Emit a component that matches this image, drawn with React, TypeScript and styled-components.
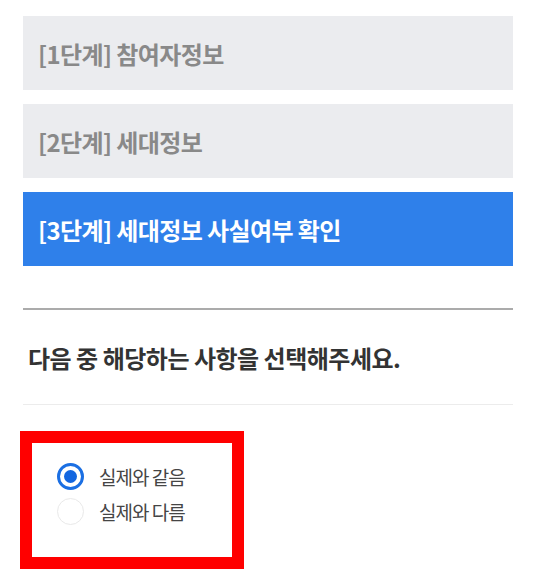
import React, { useState } from "react";
import styled, { createGlobalStyle } from "styled-components";

const Global = createGlobalStyle`
  html, body { margin: 0; padding: 0; background: #fff; }
  body { font-family: "Noto Sans CJK KR", "Noto Sans", sans-serif; }
`;

const Page = styled.div`
  width: 490px;
  padding: 16px 22px 0 23px;
  display: flex;
  flex-direction: column;
`;

const Steps = styled.div`
  display: flex;
  flex-direction: column;
  gap: 14px;
`;

const Step = styled.div<{ $active?: boolean }>`
  height: 74px;
  display: flex;
  align-items: center;
  padding-left: 15px;
  background: ${(p) => (p.$active ? "#2f80ea" : "#ebecef")};
  color: ${(p) => (p.$active ? "#ffffff" : "#898989")};
  font-size: 24px;
  font-weight: 700;
  letter-spacing: -0.6px;
`;

const Spacer = styled.div`
  height: 42px;
`;

const Divider = styled.hr<{ $strong?: boolean }>`
  margin: 0;
  border: 0;
  height: ${(p) => (p.$strong ? "2px" : "1px")};
  background: ${(p) => (p.$strong ? "#ababab" : "#ececec")};
`;

const Question = styled.div`
  height: 94px;
  display: flex;
  align-items: center;
  padding-left: 5px;
  font-size: 24px;
  font-weight: 700;
  color: #333333;
  letter-spacing: -0.5px;
`;

const Highlight = styled.div`
  margin: 26px 0 0 -3px;
  width: 200px;
  height: 114px;
  border: 12px solid #ff0000;
  box-sizing: content-box;
`;

const RadioList = styled.div`
  display: flex;
  flex-direction: column;
  gap: 8px;
  padding: 20px 0 0 25px;
`;

const Option = styled.label`
  display: flex;
  align-items: center;
  gap: 15px;
  cursor: pointer;
  font-size: 19px;
  color: #454545;
  letter-spacing: -1px;
`;

const Circle = styled.span<{ $checked: boolean }>`
  width: 27px;
  height: 27px;
  box-sizing: border-box;
  border-radius: 50%;
  border: ${(p) => (p.$checked ? "3px solid #1b6fe3" : "1.5px solid #e9e9e9")};
  display: flex;
  align-items: center;
  justify-content: center;
  flex-shrink: 0;
  &::after {
    content: "";
    width: 13px;
    height: 13px;
    border-radius: 50%;
    background: ${(p) => (p.$checked ? "#1366e0" : "transparent")};
  }
`;

const options = ["실제와 같음", "실제와 다름"];

export default function App() {
  const [sel, setSel] = useState(0);
  return (
    <Page>
      <Global />
      <Steps>
        <Step>[1단계] 참여자정보</Step>
        <Step>[2단계] 세대정보</Step>
        <Step $active>[3단계] 세대정보 사실여부 확인</Step>
      </Steps>
      <Spacer />
      <Divider $strong />
      <Question>다음 중 해당하는 사항을 선택해주세요.</Question>
      <Divider />
      <Highlight>
        <RadioList>
          {options.map((o, i) => (
            <Option key={o} onClick={() => setSel(i)}>
              <Circle $checked={sel === i} />
              {o}
            </Option>
          ))}
        </RadioList>
      </Highlight>
    </Page>
  );
}
